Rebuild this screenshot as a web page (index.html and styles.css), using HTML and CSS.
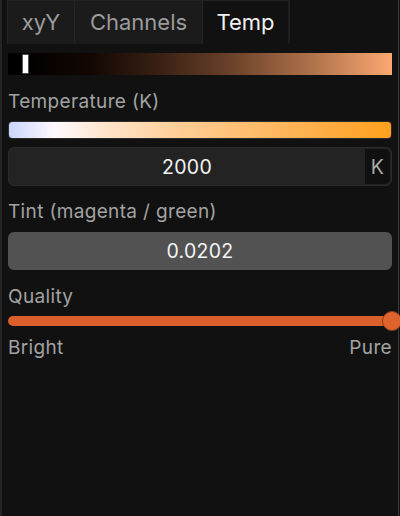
FILE: index.html
```html
<!DOCTYPE html>
<html>
<head>
<meta charset="utf-8">
<link rel="stylesheet" href="styles.css">
</head>
<body>
<div class="frame">
  <div class="tabs">
    <div class="tab tab-xyy">xyY</div>
    <div class="tab tab-channels">Channels</div>
    <div class="tab tab-temp active">Temp</div>
  </div>
  <div class="content">
    <div class="ramp">
      <div class="ramp-handle"></div>
    </div>

    <div class="label label-temp">Temperature (K)</div>
    <div class="kelvin-bar"></div>
    <div class="field field-temp">
      <span class="field-value">2000</span>
      <span class="field-unit">K</span>
    </div>

    <div class="label label-tint">Tint (magenta / green)</div>
    <div class="field field-tint">
      <span class="field-value">0.0202</span>
    </div>

    <div class="label label-quality">Quality</div>
    <div class="slider">
      <div class="slider-track"></div>
      <div class="slider-thumb"></div>
    </div>
    <div class="slider-ends">
      <span>Bright</span>
      <span>Pure</span>
    </div>
  </div>
</div>
</body>
</html>
```

FILE: styles.css
```css
html, body {
  margin: 0;
  padding: 0;
  background: #111111;
}

body {
  font-family: Inter, "Noto Sans", "Liberation Sans", sans-serif;
  color: #a3a3a3;
}

.frame {
  width: 396px;
  height: 516px;
  border-left: 2px solid #252525;
  border-right: 1px solid #3a3a3a;
  background: #111111;
  box-sizing: content-box;
}

/* tab strip */
.tabs {
  display: flex;
  height: 44px;
  padding-left: 5px;
}

.tab {
  box-sizing: border-box;
  height: 44px;
  display: flex;
  align-items: center;
  justify-content: center;
  font-size: 22px;
  color: #9b9b9b;
  background: #1b1b1b;
  border-left: 1px solid #262626;
  border-top: 1px solid #222;
  border-bottom: 1px solid #1b1b1b;
  padding-bottom: 1px;
}

.tab-xyy { width: 67px; }
.tab-channels { width: 128px; }
.tab-temp {
  width: 88px;
  border-right: 2px solid #1f1f1f;
  border-left: 1px solid #262626;
}

.tab.active {
  background: #111111;
  color: #f2f2f2;
  border-bottom-color: #111111;
}

/* panel body */
.content {
  padding: 0 6px;
  display: flex;
  flex-direction: column;
}

.ramp {
  position: relative;
  margin-top: 9px;
  height: 22px;
  background: linear-gradient(to right, #000000 4%, #140803 22%, #3a2214 40%, #6b4129 58%, #b0744c 80%, #fda871 100%);
}

.ramp-handle {
  position: absolute;
  left: 14px;
  top: 1px;
  width: 5px;
  height: 18px;
  background: #ffffff;
  border: 1px solid #555;
  border-radius: 1px;
}

.label {
  font-size: 19px;
  line-height: 22px;
  letter-spacing: 0.35px;
  color: #a3a3a3;
}

.label-temp { margin-top: 16px; }
.label-tint { margin-top: 15px; }
.label-quality { margin-top: 16px; }

.kelvin-bar {
  margin-top: 8px;
  height: 18px;
  box-sizing: border-box;
  border: 1px solid #2c2c2c;
  border-radius: 4px;
  background: linear-gradient(to right, #c9d6ff 0%, #fff8ff 12%, #ffe5cc 25%, #ffcd95 45%, #ffbc6a 65%, #ffad45 82%, #ffa11e 100%);
}

.field {
  position: relative;
  box-sizing: border-box;
  height: 39px;
  border-radius: 6px;
  display: flex;
  align-items: center;
  justify-content: center;
  font-size: 19.5px;
  letter-spacing: 0.3px;
  color: #f4f4f4;
}

.field-temp {
  margin-top: 8px;
  background: #232323;
  border: 1px solid #2b2b2b;
  padding-right: 26px;
}

.field-unit {
  position: absolute;
  right: 1px;
  top: 1px;
  bottom: 1px;
  width: 25px;
  background: #101010;
  color: #a8a8a8;
  display: flex;
  align-items: center;
  justify-content: center;
  border-radius: 0 5px 5px 0;
}

.field-tint {
  margin-top: 9px;
  height: 38px;
  background: #525252;
}

.slider {
  position: relative;
  margin-top: 8px;
  height: 10px;
}

.slider-track {
  height: 10px;
  border-radius: 5px;
  background: #d95f2b;
  margin-right: 2px;
}

.slider-thumb {
  position: absolute;
  right: -10px;
  top: -5px;
  width: 20px;
  height: 20px;
  box-sizing: border-box;
  border-radius: 50%;
  background: #df632c;
  border: 1px solid #8a3d1a;
}

.slider-ends {
  margin-top: 11px;
  display: flex;
  justify-content: space-between;
  font-size: 19px;
  line-height: 22px;
  letter-spacing: 0.35px;
  color: #a3a3a3;
}
```
